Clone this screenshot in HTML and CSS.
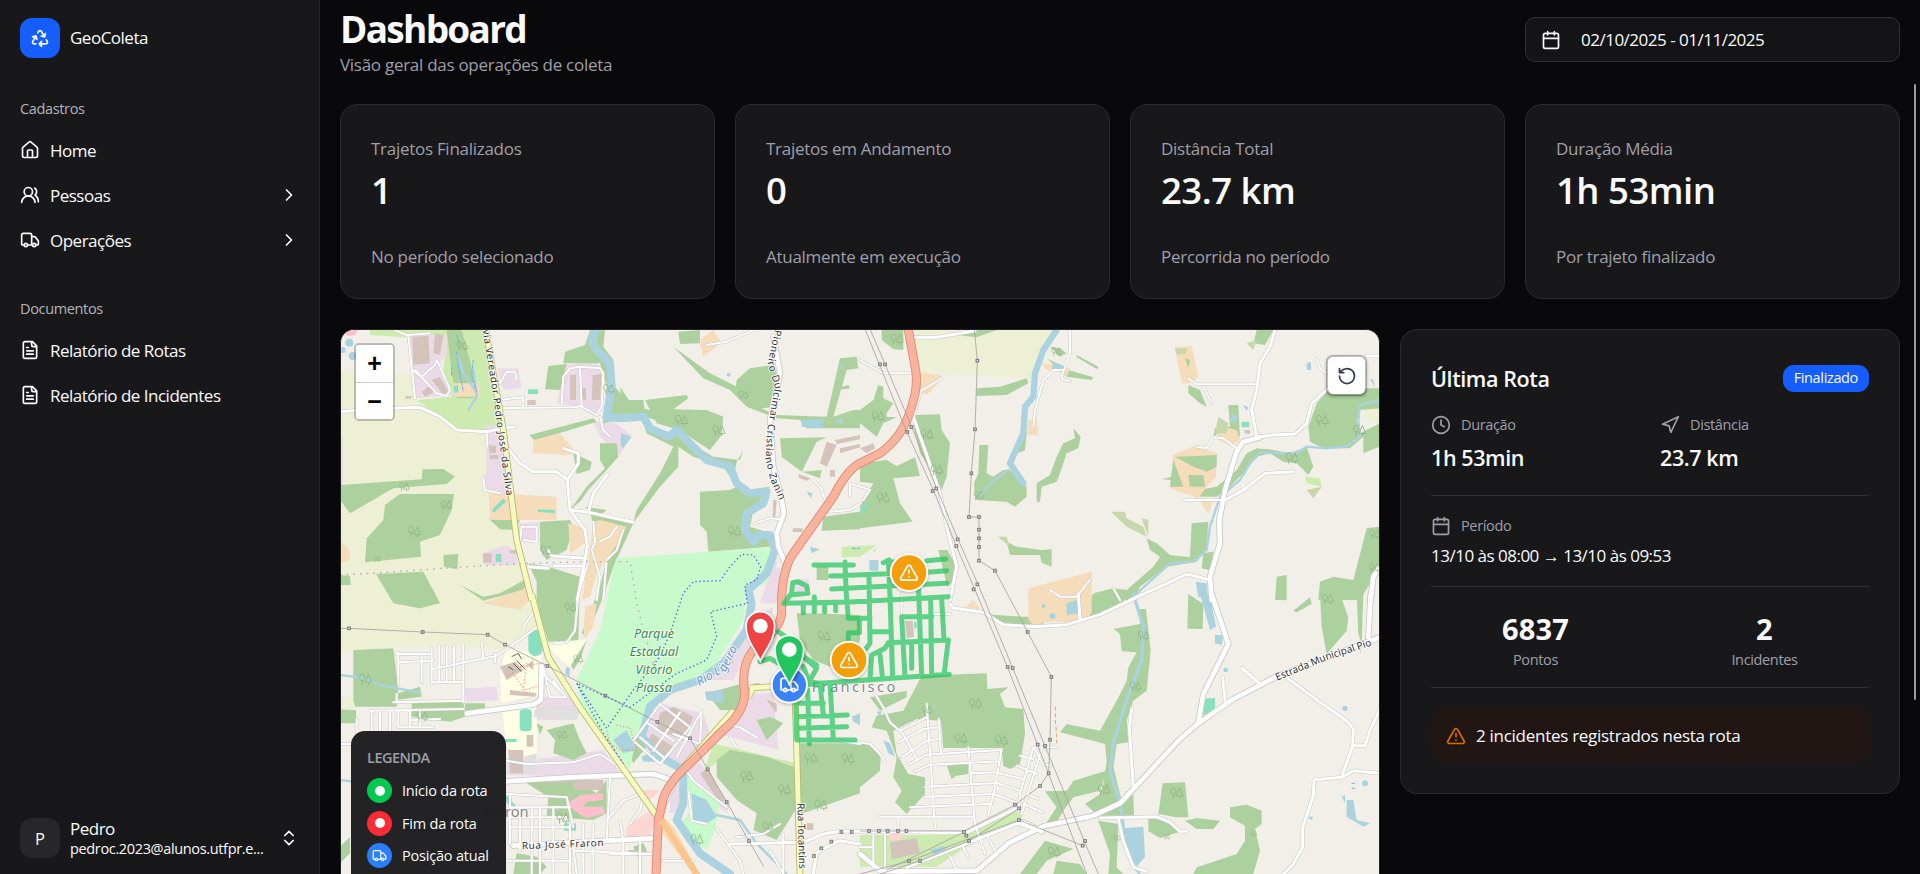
FILE: index.html
```html
<!DOCTYPE html>
<html lang="pt-BR">
<head>
<meta charset="utf-8">
<title>GeoColeta</title>
<link rel="stylesheet" href="styles.css">
</head>
<body>
<svg class="sprite" aria-hidden="true">
  <symbol id="i-recycle" viewBox="0 0 24 24"><path d="M7 19H4.815a1.83 1.83 0 0 1-1.57-.881 1.785 1.785 0 0 1-.004-1.784L7.196 9.5M11 19h8.203a1.83 1.83 0 0 0 1.556-.89 1.784 1.784 0 0 0 0-1.775l-1.226-2.12M14 16l-3 3 3 3M8.293 13.596 7.196 9.5 3.1 10.598M9.344 5.811l1.093-1.892A1.83 1.83 0 0 1 11.985 3a1.784 1.784 0 0 1 1.546.888l3.943 6.843M13.378 9.633l4.096 1.098 1.097-4.096"/></symbol>
  <symbol id="i-home" viewBox="0 0 24 24"><path d="M15 21v-8a1 1 0 0 0-1-1h-4a1 1 0 0 0-1 1v8M3 10a2 2 0 0 1 .709-1.528l7-5.999a2 2 0 0 1 2.582 0l7 5.999A2 2 0 0 1 21 10v9a2 2 0 0 1-2 2H5a2 2 0 0 1-2-2z"/></symbol>
  <symbol id="i-users" viewBox="0 0 24 24"><path d="M18 21a8 8 0 0 0-16 0"/><circle cx="10" cy="8" r="5"/><path d="M22 20c0-3.37-2-6.5-4-8a5 5 0 0 0-.45-8.3"/></symbol>
  <symbol id="i-truck" viewBox="0 0 24 24"><path d="M14 18V6a2 2 0 0 0-2-2H4a2 2 0 0 0-2 2v11a1 1 0 0 0 1 1h2M15 18H9M19 18h2a1 1 0 0 0 1-1v-3.65a1 1 0 0 0-.22-.624l-3.48-4.35A1 1 0 0 0 17.52 8H14"/><circle cx="17" cy="18" r="2"/><circle cx="7" cy="18" r="2"/></symbol>
  <symbol id="i-file" viewBox="0 0 24 24"><path d="M15 2H6a2 2 0 0 0-2 2v16a2 2 0 0 0 2 2h12a2 2 0 0 0 2-2V7ZM14 2v4a2 2 0 0 0 2 2h4M10 9H8M16 13H8M16 17H8"/></symbol>
  <symbol id="i-chevron" viewBox="0 0 24 24"><path d="m9 18 6-6-6-6"/></symbol>
  <symbol id="i-updown" viewBox="0 0 24 24"><path d="m7 15 5 5 5-5M7 9l5-5 5 5"/></symbol>
  <symbol id="i-calendar" viewBox="0 0 24 24"><path d="M8 2v4M16 2v4M3 10h18"/><rect x="3" y="4" width="18" height="18" rx="2"/></symbol>
  <symbol id="i-clock" viewBox="0 0 24 24"><circle cx="12" cy="12" r="10"/><path d="M12 6v6l4 2"/></symbol>
  <symbol id="i-nav" viewBox="0 0 24 24"><path d="M3 11 22 2l-9 19-2-8z"/></symbol>
  <symbol id="i-alert" viewBox="0 0 24 24"><path d="m21.73 18-8-14a2 2 0 0 0-3.48 0l-8 14A2 2 0 0 0 4 21h16a2 2 0 0 0 1.73-3M12 9v4M12 17h.01"/></symbol>
  <symbol id="i-reset" viewBox="0 0 24 24"><path d="M3 12a9 9 0 1 0 9-9 9.75 9.75 0 0 0-6.74 2.74L3 8M3 3v5h5"/></symbol>
</svg>

<div class="app">
  <aside class="sidebar">
    <div class="brand"><span class="logo"><svg class="icon"><use href="#i-recycle"/></svg></span><span class="t-nav">GeoColeta</span></div>
    <nav>
      <div class="group">
        <div class="group-label t-xs">Cadastros</div>
        <a class="item"><svg class="icon"><use href="#i-home"/></svg><span class="t-nav">Home</span></a>
        <a class="item"><svg class="icon"><use href="#i-users"/></svg><span class="t-nav">Pessoas</span><svg class="icon end"><use href="#i-chevron"/></svg></a>
        <a class="item"><svg class="icon"><use href="#i-truck"/></svg><span class="t-nav">Operações</span><svg class="icon end"><use href="#i-chevron"/></svg></a>
      </div>
      <div class="group">
        <div class="group-label t-xs">Documentos</div>
        <a class="item"><svg class="icon"><use href="#i-file"/></svg><span class="t-nav">Relatório de Rotas</span></a>
        <a class="item"><svg class="icon"><use href="#i-file"/></svg><span class="t-nav">Relatório de Incidentes</span></a>
      </div>
    </nav>
    <div class="user">
      <span class="avatar">P</span>
      <span class="who"><span class="t-nav">Pedro</span><span class="t-xs mail">pedroc.2023@alunos.utfpr.e...</span></span>
      <svg class="icon"><use href="#i-updown"/></svg>
    </div>
  </aside>

  <main class="main">
    <header class="head">
      <div>
        <h1>Dashboard</h1>
        <p class="t-sm muted">Visão geral das operações de coleta</p>
      </div>
      <button class="date"><svg class="icon"><use href="#i-calendar"/></svg><span class="t-date">02/10/2025 - 01/11/2025</span></button>
    </header>

    <section class="stats">
      <article class="card stat"><p class="t-sm muted">Trajetos Finalizados</p><p class="value">1</p><p class="t-sm muted foot">No período selecionado</p></article>
      <article class="card stat"><p class="t-sm muted">Trajetos em Andamento</p><p class="value">0</p><p class="t-sm muted foot">Atualmente em execução</p></article>
      <article class="card stat"><p class="t-sm muted">Distância Total</p><p class="value">23.7 km</p><p class="t-sm muted foot">Percorrida no período</p></article>
      <article class="card stat"><p class="t-sm muted">Duração Média</p><p class="value">1h 53min</p><p class="t-sm muted foot">Por trajeto finalizado</p></article>
    </section>

    <section class="lower">
      <div class="map">
        <svg class="tiles" viewBox="3 30 3114 1632" preserveAspectRatio="xMinYMin slice">
          <defs>
            <symbol id="tree" viewBox="0 0 40 40" overflow="visible"><path d="M9 38V22M9 26C-2 26-1 4 9 4s11 22 0 22zM29 38V30M29 4 18 30h21z"/></symbol>
            <symbol id="pylon" viewBox="0 0 10 10" overflow="visible"><rect x="1" y="1" width="8" height="8"/></symbol>

            <!-- minor streets -->
            <g id="minor">
              <path d="M165 30 205 48 225 235M205 45 270 40M215 150 245 170 285 135 290 120 300 140 330 210 320 228 290 220 225 150M480 240 550 232V262M480 264 700 262 725 258M665 250 670 170 690 145 720 140 780 145 790 160 785 260 770 285 725 260 720 140M780 290 790 330 810 350M440 335 442 380M430 475 435 510 480 520M480 190 500 155 525 155 530 180"/>
              <path d="M760 605 765 665 755 690 780 770 770 840M830 620 810 650 780 665M850 630 830 690 800 720 790 840M745 725 710 840M1100 75 1160 65 1240 30M1420 480 1440 500 1470 575 1530 570 1560 550M1245 610 1290 595 1320 598M1560 500 1530 490 1530 530M540 660 545 620 590 620 590 665 550 660"/>
              <g transform="translate(1560 0)"><path d="M0 120 70 160 150 160M180 215 245 175M520 320 525 270 550 180 580 150 610 150M605 170 630 100V30M985 175 1010 193H1195M1030 200 1055 250M1010 380 1040 385 1060 352 1090 355 1130 385M975 540H1090M1370 115 1380 145 1400 160M0 500 30 510 10 540M610 150 605 175 630 185M760 805 780 840M570 810 600 830 650 830 690 780"/></g>
              <g transform="translate(0 822)"><path d="M170 180H270M175 205 280 200M175 175V270M245 180V265M275 160V270M298 155V265M320 155V262M342 155V262M370 150V325M425 145 430 190M465 180V205M280 225 470 185 500 165 590 100M280 265 370 263M160 325 370 320M170 300V325M90 350 370 345M120 350V420M150 350V440M95 350V440M50 375V480M175 350V400M210 350V400M240 350V400M0 450H60M180 400H280M215 378 300 375"/>
              <path d="M500 500 560 510 700 505 780 480 825 510M590 40 550 100M715 0 705 110 680 145 620 150M600 230 680 310 630 310 610 220M640 260 670 300M500 600 680 610 700 700M810 550 800 740M510 640H690M510 670H680M510 700H690M510 750V600M540 640V770M575 640V840M600 640V840M640 640V840M690 690V840M500 800H690M730 690V840M760 690V840M700 770 940 780M800 680 850 620 900 600M840 680 850 740M870 690 900 650 910 600M700 760 710 840M850 740V840M900 740V840M810 780H940"/>
              <path d="M960 330 880 440 960 510 1050 400 960 330M1020 355 940 470M1085 350 1010 490M920 385 1000 440M900 430 970 490M1000 420 1080 450 1085 350M1030 520 1060 560 1160 640M1045 590 1055 680 1100 690M1130 705 1200 800 1210 840M960 800H1060M1190 730 1270 720 1320 690M1330 720V840M1290 770 1330 840M1150 390 1200 400 1250 430M1170 430 1190 460M1220 720V750M1560 450 1500 440"/></g>
              <g transform="translate(1560 822)"><path d="M270 60H220M125 60V0M45 300 70 340 90 385 130 420 170 495M200 330 225 700M236 375 243 480M325 460 345 690 375 780M425 465 405 580 385 665M120 410 200 370M115 445 190 405 236 400M125 490 200 440 236 435M145 512 200 482 425 468M165 532 210 512 420 502M335 538 405 535 490 555M195 578 410 567 480 590M195 608 400 600 470 625M150 640 390 630M60 668H340M115 670V705M480 485 520 495M470 515 530 540M520 460 550 510 575 515M520 460 480 600 475 650M545 465 485 660M500 600 535 615M490 630 550 655M520 460H590M475 690 545 715M40 715V820M75 715V820M0 760H40M0 445 30 450 60 480 75 505M270 785 290 830M310 760 325 790M385 730 405 770M1170 240 1200 270"/></g>
            </g>

            <!-- secondary streets -->
            <g id="street">
              <path d="M0 275 160 265 240 262 300 290 350 330 440 335 490 325 525 320M495 340 500 380 540 430 580 455 650 455 682 480 715 430 715 400 670 385M682 480 690 570 735 630 742 680 725 770 712 840M690 570 745 577 880 607M745 577 760 520 800 465M565 740 625 745M625 690 635 708 728 714M642 738H725"/>
              <g transform="translate(1560 0)"><path d="M160 52 230 52 345 32M1245 30 1230 80 1200 130 1190 210 1175 270 1190 350M1200 350 1240 345 1305 342 1340 310 1355 250 1410 200M1095 540 1150 510 1215 460 1300 455M180 220 160 290 240 520 265 640 290 740 270 840M1520 108H1560M810 840 900 800 980 762 1045 778"/></g>
              <g transform="translate(1560 822)"><path d="M1280 250 1380 325 1460 380 1480 405 1478 455 1445 550 1362 557 1360 605 1328 700 1328 760 1300 810 1270 840M1445 550 1480 530 1560 538M1478 455H1515L1530 410 1560 345M815 345 808 400 820 580M720 672 890 668 930 685 960 712H980M775 675 790 740 820 820 860 832M1095 320 1088 250M1200 270 1145 222M0 712 320 716M320 716 475 640M270 30 280 42 370 55 430 92 520 98 620 92 720 62 810 20 850 0M660 75 655 0M140 820 480 685"/></g>
              <g transform="translate(0 822)"><path d="M1170 750 1390 745 1450 720 1500 712 1560 712M1560 750 1500 740 1430 775 1420 840"/></g>
            </g>

            <!-- wider white roads -->
            <g id="main-road">
              <path d="M1325 540 1332 580 1310 640 1315 680 1333 725M1325 540 1300 440 1290 300 1320 160 1300 50"/>
              <g transform="translate(0 822)"><path d="M380 358 580 332 603 318 605 215M496 562 690 550 940 540 1000 560M520 755 935 733M960 655 1000 570"/></g>
              <g transform="translate(1560 0)"><path d="M1200 352 1150 365 1130 395 1095 510 1078 600 1080 670 1050 770 1055 840M1560 740 1540 770 1532 840"/></g>
              <g transform="translate(1560 822)"><path d="M1055 0 1105 150 1030 300 1015 385M1532 0 1525 130M1560 130 1245 250 1120 315 1015 388 960 435 820 585 780 628 700 665 550 697 450 745 350 830 120 832 60 830 0 780M490 685 545 712"/></g>
            </g>
            <g id="yellow">
              <path d="M437 30 490 330 530 660 575 840"/>
              <g transform="translate(0 822)"><path d="M575 0 625 190 720 340 960 680M1230 282 1340 275M1180 350 1030 520M1365 300 1370 460 1380 840M1225 310 1240 280"/></g>
            </g>
            <g id="trunk">
              <path d="M1705 28 1727 150Q1735 200 1715 260 1690 350 1620 400L1560 430Q1520 450 1480 530L1360 700Q1330 740 1325 830V880Q1320 930 1240 990 1200 1040 1215 1120 1210 1180 1150 1230L1050 1330Q970 1400 965 1460L955 1500 948 1662"/>
            </g>
            <path id="p-vereador" d="M428 30 455 200 500 530"/>
            <path id="p-pioneiro" d="M1312 30 1292 130 1312 200 1290 330 1285 420 1300 480 1330 545"/>
            <path id="p-toc" d="M1372 1450 1378 1670"/>
            <path id="p-jose" d="M546 1588 792 1578"/>
            <path id="p-ligeiro" d="M1078 1098 1160 1050 1220 930"/>
            <path id="p-estrada" d="M2812 1082 2960 1020 3130 965"/>
          </defs>

          <rect class="land" x="0" y="0" width="3120" height="1700"/>

          <!-- farmland -->
          <g class="farm">
            <path d="M0 150 220 165 225 240 300 280 360 335 440 330 445 600 500 610 550 740 590 870 600 930 490 990 170 980 0 1000ZM1725 30H2150L2110 90 2070 175 1725 155ZM3070 270 3120 240V310L3070 300ZM0 1130H40V1170H0Z"/>
          </g>
          <g class="grass">
            <path d="M90 27H430L488 335H365L230 240 335 230 310 150 320 60 90 45Z"/>
            <path d="M1120 1270 1370 1330V1345L1150 1310 1090 1360Z"/>
            <path d="M1560 1545H1860L2040 1455 2045 1500 1880 1580 1790 1640H1560Z"/>
            <path d="M1505 680 1610 675 1560 710 1505 712Z"/>
          </g>

          <!-- industrial and commercial -->
          <g class="industry">
            <path d="M205 45H320V100L300 130 340 225 225 235ZM470 145 535 145 545 205 490 210ZM675 135 765 125 795 150 785 270 765 290 720 262 650 250ZM760 305 820 305 875 345 840 405 780 350ZM437 315 485 320 500 525 435 515 430 470 440 460ZM425 700 500 675 535 700 530 735 430 735ZM535 610 600 605 595 665 545 665ZM0 340 8 350V500H0Z"/>
            <path d="M600 1130 690 1130 720 1180 690 1200H580ZM500 1330 790 1290 850 1370H720L500 1365ZM960 1150 1090 1180 1110 1240 1020 1340 890 1250ZM1230 1120 1300 1120 1315 1290 1130 1240 1180 1190ZM1030 1350 1080 1330 1170 1450 1160 1480 1060 1400ZM1225 900 1300 860 1290 930 1215 1010 1180 1080 1080 1080 1120 1060ZM1290 760 1320 740V850L1260 850ZM1370 780 1405 775 1410 810 1365 820ZM370 1105 470 1100 475 1140 380 1145ZM1290 690 1310 690V760H1290ZM990 1380 1040 1370 1030 1470 990 1480Z"/>
          </g>
          <g class="retail"><path d="M860 1520 960 1450 930 1550H860ZM890 1410 960 1410 930 1440ZM1650 1540H1690L1680 1560H1650Z"/></g>

          <!-- woods -->
          <g class="wood">
            <path d="M320 30H365L410 200 400 235H350L335 160ZM750 30H795L790 80 820 120 825 200 860 240 910 240 915 280 790 310 800 200 780 130 670 130 675 95 735 75ZM1015 35 1080 30V70L1020 72ZM625 138 680 132 660 210 615 208ZM568 345 760 295 770 305 640 345 585 362ZM780 370 830 370 835 410 800 450 745 510 720 545 690 570 740 500 795 445 780 420ZM700 400 755 425 750 450 710 462ZM840 200 870 245 910 265 1000 290 990 310 910 290 850 270ZM915 240 1040 225 1045 235 1000 268 1100 270 1150 290 1145 345 1110 390 1040 345 1000 325 950 310ZM910 310 1010 345 1120 410 1200 420 1210 390 1190 425 1180 480 1225 510 1290 500 1240 570 1230 620 1290 640 1290 680 1105 695 1100 635 1080 615V515L1170 510 1190 500 1150 440 1060 410 1015 380V440L960 500 880 608 890 570 960 460 1000 380 920 340ZM1190 180 1230 145 1300 135 1310 160 1300 260 1240 270 1185 215ZM1000 80 1110 160 1190 200 1240 255 1310 285 1460 290 1500 115 1550 110 1555 145 1520 150 1480 290 1540 270H1560V325H1400L1380 300 1310 295 1220 260 1170 210 1090 175ZM1490 205 1525 195 1530 205 1495 210ZM1320 355 1460 352 1430 365 1385 455 1325 410ZM1385 455 1445 450 1440 475ZM1450 590 1560 575V628L1445 632Z"/>
            <path d="M0 495 245 478 248 448 310 447 345 470 320 492 160 505 30 580 0 540ZM180 522H342L335 570 300 645 240 665 243 710 75 727 80 655 130 600 135 555ZM310 705 355 702 352 748 312 740ZM108 762 250 755 290 830 300 850 240 865 160 850ZM0 765 30 768 32 795H0ZM360 795 430 830 480 820 570 770 550 810 430 842ZM600 605 690 600 700 620 680 690 620 720 600 690ZM445 595 540 600 525 630 480 628ZM565 730 625 740 720 770 715 960 690 970 625 965 605 900 590 840 590 785ZM690 570 880 610 820 740 790 830 740 950 725 940 780 800 800 720 840 640 760 620 750 570 700 575ZM735 560 800 570 770 595Z"/>
            <path d="M40 990 160 985 175 1110 170 1160H45L40 1140ZM175 1120 240 1100 245 1130 170 1140ZM0 1168 48 1170V1210L0 1210ZM215 1150 370 1145 375 1190 330 1205 215 1190ZM375 1150 435 1150V1170L375 1175ZM620 1230 700 1210 720 1260 740 1300 700 1320 640 1300 645 1260ZM590 1210 610 1220 600 1245ZM680 1010 740 960 720 1020 700 1050ZM590 1370 690 1370 770 1420 800 1380V1480L760 1500 620 1490 625 1430 560 1390ZM530 1600 590 1610 620 1640 600 1662H520ZM830 1205 870 1215 920 1280 880 1330 830 1250ZM1100 1120 1210 1090V1170H1140ZM1250 1200 1290 1190 1330 1210 1280 1260ZM1130 1320 1170 1290 1280 1310 1370 1345V1500L1390 1480 1560 1420V1270L1380 1270 1380 1450 1360 1480 1310 1560 1240 1530 1250 1480 1190 1440 1130 1370ZM1370 880 1420 880 1560 885V960L1520 1060 1420 1020 1380 960ZM1430 740H1465V780H1430ZM880 1580 910 1570 920 1590 890 1610ZM0 1580 30 1550V1600L0 1630Z"/>
            <g transform="translate(1560 0)">
              <path d="M65 30H130V90L100 88 65 60ZM55 195 70 200 70 235 100 250 80 280 80 290 110 292 70 310 50 350 0 310V270L40 240ZM0 430 80 420 110 438 165 412 180 468 100 475 120 550 158 605 0 625V560L40 490 0 485ZM165 285 240 283 245 330 270 370 260 470 245 510 220 460 180 400 160 320ZM290 45 330 30H410L350 52ZM350 205 420 200 500 175 505 190 440 225 350 228ZM570 80 600 85 620 100 600 110ZM560 115 600 135 625 150 700 172 695 180 620 170ZM650 105 715 140 712 148 650 112ZM358 375 385 375 380 460 400 470 430 450 450 450 500 500 500 530 465 560 440 545 345 540 342 490 355 460ZM480 340 500 340 495 390 475 400ZM640 325 662 350 655 385 620 400 600 460 590 485 545 500 540 545 530 545 530 490 570 465 590 410 610 370 645 355ZM440 665 470 680 545 690 575 688V740L545 728 540 705 450 705ZM860 655 890 670 930 705 990 712 995 610 1045 605 1040 690 1010 725 920 740 840 800 820 840H690L700 820 760 805 800 810 880 740 900 710 870 690ZM1190 30H1240L1215 75 1180 70ZM985 195 1020 210 1040 260 1020 250 985 220ZM1105 255H1135L1140 350 1110 350 1100 330 1060 350 1065 325 1110 320ZM985 410 1030 405 1055 440 1030 455 990 430ZM940 405 1070 400V410L945 415 930 500 960 505 930 500 935 480 905 478 935 470ZM990 468H1030V500L995 500ZM1015 510 1070 500 1130 450 1160 400 1190 385 1240 390 1290 400 1340 380 1360 440 1345 465 1310 430 1270 425 1230 400 1190 410 1150 460 1100 510 1070 530 1020 530ZM1410 205H1560V265L1500 270 1490 300 1500 340 1560 310V380L1510 400 1510 350 1470 385 1390 385 1350 365 1345 320 1370 250ZM1520 625 1560 620V740L1530 790 1500 840H1375L1380 785 1420 770 1480 780ZM1250 770 1280 765V840H1245ZM1030 700 1060 695 1050 750 1025 745ZM235 690H262L285 730 275 790 262 800Z"/>
            </g>
            <g transform="translate(1560 822)">
              <path d="M375 60 440 65 530 70 555 92 450 90 390 75ZM690 10 820 0 800 15 720 60 690 70ZM985 0 1030 30 1028 105 982 104ZM840 45H858L872 170 860 290 820 320 800 380 805 445 770 450 760 520 780 600 790 630 820 600 822 665 715 665 675 630 720 600 730 570 740 500 735 450 700 440 600 415 620 390 720 410 770 320 800 260 805 220 830 175 785 172 780 120 760 105 840 90ZM185 245 380 238 382 285 445 280 420 300 435 340 490 345 495 420 480 510 450 525 430 515 425 462H250L243 380 170 375 100 410 110 480 145 540 195 550V600L140 660 105 625 125 590 100 550 110 490 80 410 35 400 50 365 130 350ZM30 310 140 290V310L60 350ZM0 440 30 450 62 490 60 530 0 580ZM260 515 325 510V540L290 545 275 555ZM555 592 620 590 640 560 740 530 720 590 640 610 610 650 590 685H560L590 640ZM555 740 640 765 560 800 530 840H480ZM590 800 660 810 680 840H580ZM715 680 775 690 770 820 790 840H745L750 780ZM865 672 930 680 955 715 900 732 865 712ZM908 568 975 565 985 670 950 670 895 660ZM975 680 1010 672 1080 680 1060 705 1010 705ZM1110 640 1160 632 1205 650 1205 690 1185 705 1200 770 1180 840H1000L1010 820 1070 800 1130 780 1155 740V695L1110 670ZM1300 50 1350 10 1355 30 1310 55ZM1380 0H1440L1465 70 1460 110 1400 180 1385 100ZM1490 0H1510L1505 150 1495 120ZM1245 0H1275V20ZM150 0 160 0Z"/>
            </g>
          </g>
          <path class="park" d="M828 715 1290 683 1300 720 1280 790 1220 810 1210 900 1100 1080 980 1105 930 1150 890 1240 870 1350 720 1150 710 1080 780 930Z"/>
          <path class="park" d="M1040 1350 1070 1400 1140 1440 1125 1530 1100 1590 1010 1520 1050 1480Z"/>
          <path class="grass" d="M1600 690 1615 680 1600 700ZM2895 470 2940 475 2945 500 2900 490Z"/>

          <!-- orchards and residential parcels -->
          <g class="orchard">
            <path d="M580 360 660 340 710 400 685 405 578 400ZM445 520 650 530V600L450 600ZM685 610 725 620 735 670 690 700ZM760 605 780 600 860 620 840 660 770 760 750 830 725 840 745 720ZM340 190H420V230H345ZM1085 55 1120 30 1140 60 1130 80 1090 110 1080 75ZM0 660 30 690V720L0 730ZM430 850 570 800 580 830 540 870ZM735 860 770 850 760 920 730 960ZM960 1480 1000 1520 1080 1662H1060L960 1530Z"/>
            <g transform="translate(1560 0)"><path d="M150 155 245 165 235 190 200 225 180 215ZM945 82 995 78 1015 170 990 190H965ZM545 130 590 135 590 155 560 150ZM590 135 630 145 620 170ZM505 300 530 295 535 345 500 345ZM940 405 1010 375 1070 400 1068 470 1040 500 1015 535 930 505ZM1090 320 1130 330 1140 360 1115 380 1060 352ZM1020 540 1060 540 1045 585ZM505 805 695 755V880L520 915 505 900Z"/></g>
            <g transform="translate(1560 822)"><path d="M505 0H695L690 70 640 90 530 75 510 50ZM315 40 340 18 360 45Z"/></g>
          </g>
          <g class="wood"><path d="M2505 410 2570 408 2630 405V440L2600 455 2560 440ZM2500 420 2530 500 2490 500ZM2545 465H2590L2595 500 2550 500ZM2535 115 2550 120 2545 145Z"/></g>
          <g class="scrub"><path d="M2505 85H2540V100L2510 105ZM2313 575 2355 575 2360 595 2410 620 2420 650 2360 620ZM2405 595 2425 600 2425 650ZM1973 650 2000 650 2010 680ZM2635 290 2665 310 2660 340 2625 340ZM2900 510 2945 500 2920 535ZM2720 70 2750 60 2740 90ZM2860 500 2900 480Z"/></g>
          <g class="campus"><path d="M500 980 605 1005 610 1120 485 1150 480 1060ZM485 1160H590V1350L500 1280ZM620 965 740 960 690 1040 640 1000Z"/></g>

          <!-- buildings, pitches and pools -->
          <g class="building">
            <path d="M217 50 265 48 270 130 220 135ZM285 40 310 45 300 105 280 100ZM275 180 300 170 325 215 310 225ZM245 215 270 195 285 215 255 230ZM758 165 785 162 780 240 755 240ZM690 165H708V240H690ZM725 205H738V240H722ZM562 240H587V255H562ZM447 375 468 378V398H448ZM449 405H475V418H449ZM1460 365 1490 375 1460 440 1440 430ZM1485 360 1560 345V358L1490 372ZM1500 385 1560 372V382L1500 400ZM1375 462 1412 475 1400 482 1378 475ZM1470 450H1485V470H1470ZM1358 625H1388V636H1358ZM1300 540 1310 540 1305 600 1298 600ZM430 700H455V728H430ZM510 690H535V700H510ZM196 228H215V236H196Z"/>
            <path d="M480 1040 525 1025 550 1050 500 1080ZM560 1035 580 1020 580 1050ZM510 1110 590 1120 585 1130 510 1125ZM560 1245H580V1280H560ZM505 1290H550V1360H510ZM560 1330 585 1340V1360H560ZM700 1380H790V1410H700ZM620 1375 690 1370V1385L620 1390ZM1080 1360 1105 1345 1155 1440 1140 1450ZM960 1180 1000 1160 1060 1190 1030 1260 950 1230ZM1150 1010H1180V1030H1150ZM1240 1090H1260V1110H1240ZM1280 1140 1310 1150V1180ZM935 1240 1000 1280 980 1320 920 1270ZM865 1590H920V1600H865ZM1400 1510 1420 1510 1420 1530 1400 1530Z"/>
            <path d="M1560 385 1600 370 1605 385 1580 400ZM2712 330H2730V342L2715 340ZM1695 902H1718L1722 950 1700 955ZM1650 1565 1730 1555 1740 1600 1655 1618Z"/>
          </g>
          <g class="parking"><path d="M590 1155 720 1165 710 1200 580 1190ZM550 1310 590 1300V1360H550Z"/></g>
          <g class="pitch"><rect x="565" y="930" width="42" height="78" rx="20"/><rect x="539" y="1168" width="36" height="66" rx="12"/><path d="M564 208H594V222H564ZM455 570 490 535 498 545 462 578ZM593 568 645 570V580L593 575ZM467 702H484V726H467ZM498 1257H530V1266H498ZM672 1510H708V1532H672ZM340 198 354 195 356 218 343 217ZM495 1420 530 1460 530 1470 500 1450ZM1560 570 1575 548 1585 555 1570 580ZM2705 305H2728V322H2705ZM1722 905H1730V925H1722ZM2590 1135 2625 1135V1180L2590 1185ZM970 1330 985 1325 990 1340Z"/></g>
          <path class="pink" d="M15 30H55L45 45 20 48ZM685 1450 720 1425 790 1420V1440L740 1445 730 1460 790 1460 795 1480 740 1495 715 1480 690 1460Z"/>
          <g class="water">
            <circle cx="28" cy="68" r="12"/><circle cx="38" cy="108" r="12"/><circle cx="8" cy="90" r="9"/><circle cx="1166" cy="164" r="6"/>
            <path d="M843 340 875 350 850 385 842 378ZM1385 300 1450 298 1448 325 1385 320ZM1500 130 1512 140 1505 150ZM1493 295 1508 295 1505 310 1492 308ZM1400 515 1418 520 1412 535ZM1410 680 1440 688 1415 700ZM680 1040 690 1045 688 1070 675 1060ZM1095 1115 1150 1110V1150L1100 1140ZM820 1260 860 1230 890 1290 850 1300ZM1055 1420 1100 1440 1130 1490 1100 1510 1060 1500ZM905 1310 935 1295 945 1325 910 1325ZM1535 1190 1560 1180V1215L1540 1205ZM2140 125 2180 140 2165 155 2135 150ZM2900 130 2912 125 2914 150H2900ZM2672 285H2690V305H2672ZM2708 255 2725 262 2720 272ZM1588 720H1615V752H1588ZM2588 600 2560 590ZM2567 785 2600 790 2605 840 2575 830ZM2580 822 2610 826 2628 920 2610 930ZM2625 945 2650 945 2645 975 2625 970ZM2180 850 2210 840 2215 880 2180 885ZM1770 1590 1810 1578 1820 1590 1790 1610ZM2345 1525 2410 1520 2415 1610 2390 1640 2350 1580ZM2900 1490 2920 1490 2915 1500ZM3005 1430 3015 1425 3015 1450ZM3020 1440 3040 1440 3050 1500 3090 1510 3070 1520 3020 1490ZM2915 1160 2930 1160ZM3060 985 3065 980 3060 1005ZM1630 1260 1650 1270 1665 1310 1645 1300ZM1610 1175 1625 1172 1620 1190ZM3090 175 3100 180 3105 205Z"/>
            <circle cx="3015" cy="1165" r="8"/><circle cx="3075" cy="1390" r="9"/><circle cx="2137" cy="888" r="9"/><circle cx="2110" cy="858" r="6"/><circle cx="2657" cy="1050" r="7"/>
          </g>

          <!-- rivers -->
          <g class="river">
            <path class="w24" d="M780 20Q740 50 770 90L810 130 815 200 800 290 840 295 910 290 930 325 985 350 1010 330 1040 360 1100 420 1170 440 1190 490 1230 520 1280 515 1270 550 1220 580 1215 630 1240 665 1255 645 1290 645 1305 690 1280 760 1225 810 1235 850 1220 930 1150 1030 1080 1080 990 1110 930 1160 905 1250 960 1310 1030 1350 1030 1450 1010 1500 1080 1600 1170 1662"/>
            <path class="w18" d="M2150 30 2110 90 2085 160 2080 230 2055 260 2050 340 2010 430 2050 490"/>
            <path class="w6" d="M2005 450 1950 490 1920 530M0 1065 60 1072 120 1095 240 1118M3120 240 3060 255 3055 300 3060 350 3020 380 2960 385 2900 380 2870 400 2760 398 2730 430 2700 480 2640 530 2610 620 2600 690 2560 725 2490 730 2380 830M0 1380 40 1385M400 150 410 230 385 270M350 100 370 160 405 210M1130 1485 1200 1500 1250 1570 1340 1662M2380 1640 2400 1662"/>
            <path class="w10" d="M2380 822 2410 920 2405 1020 2360 1140 2320 1270 2310 1350 2340 1450 2350 1520"/>
          </g>
          <path class="ditch" d="M350 95 355 140 370 215M335 140V170M400 120 395 165 410 215M350 45 360 75M3035 1390H3045M3035 1405H3045M1535 685H1560"/>

          <g class="case"><use href="#minor" class="c9"/><use href="#street" class="c13"/><use href="#main-road" class="c20"/></g>
          <g class="road"><use href="#minor" class="c6"/><use href="#street" class="c9"/><use href="#main-road" class="c15"/></g>
          <use href="#yellow" class="ycase"/><use href="#yellow" class="yfill"/>
          <use href="#trunk" class="tcase"/><use href="#trunk" class="tfill"/>
          <path class="orangeroad" d="M965 1500 1075 1670"/>

          <!-- power lines -->
          <g class="power">
            <path d="M1575 27 1700 335 1780 510 1850 680 1905 810 2003 1042 2093 1275 2240 1662M1590 27 1715 320 1790 505 1855 660 1915 795 2018 1044 2115 1278 2240 1580 2275 1662M1903 27 1912 122 1905 330 1894 460 1887 591H1917V722L1965 752 2063 936 2134 1070 2130 1260 2126 1360 2100 1398 2025 1455M0 925 27 925 248 936 443 944 495 974 622 1038 796 1127 952 1206 1050 1255 1103 1348 1160 1446 1227 1563 1271 1640M1560 1533H1872L2025 1455M1887 1563 2037 1465M2037 1500 2228 1577M1872 1536 1640 1650M1887 1563 1740 1623 1620 1662M2037 1500 1706 1624 1560 1662"/>
            <g class="nodes">
              <use href="#pylon" x="1615" y="128" width="10" height="10"/><use href="#pylon" x="1630" y="128" width="10" height="10"/><use href="#pylon" x="1709" y="316" width="10" height="10"/><use href="#pylon" x="1697" y="331" width="10" height="10"/><use href="#pylon" x="1784" y="500" width="10" height="10"/><use href="#pylon" x="1773" y="508" width="10" height="10"/><use href="#pylon" x="1848" y="653" width="10" height="10"/><use href="#pylon" x="1844" y="673" width="10" height="10"/><use href="#pylon" x="1907" y="788" width="10" height="10"/><use href="#pylon" x="1896" y="803" width="10" height="10"/>
              <use href="#pylon" x="1907" y="117" width="10" height="10"/><use href="#pylon" x="1900" y="323" width="10" height="10"/><use href="#pylon" x="1889" y="455" width="10" height="10"/><use href="#pylon" x="1882" y="586" width="10" height="10"/><use href="#pylon" x="1912" y="586" width="10" height="10"/><use href="#pylon" x="1912" y="624" width="10" height="10"/><use href="#pylon" x="1912" y="650" width="10" height="10"/><use href="#pylon" x="1912" y="676" width="10" height="10"/><use href="#pylon" x="1912" y="717" width="10" height="10"/><use href="#pylon" x="1960" y="747" width="10" height="10"/>
              <use href="#pylon" x="2058" y="931" width="10" height="10"/><use href="#pylon" x="2129" y="1066" width="10" height="10"/><use href="#pylon" x="1998" y="1036" width="10" height="10"/><use href="#pylon" x="2013" y="1039" width="10" height="10"/><use href="#pylon" x="2088" y="1269" width="10" height="10"/><use href="#pylon" x="2110" y="1273" width="10" height="10"/><use href="#pylon" x="2125" y="1254" width="10" height="10"/><use href="#pylon" x="2121" y="1355" width="10" height="10"/><use href="#pylon" x="2095" y="1393" width="10" height="10"/><use href="#pylon" x="2020" y="1449" width="10" height="10"/><use href="#pylon" x="2032" y="1460" width="10" height="10"/><use href="#pylon" x="2032" y="1495" width="10" height="10"/><use href="#pylon" x="2223" y="1572" width="10" height="10"/><use href="#pylon" x="2230" y="1558" width="10" height="10"/>
              <use href="#pylon" x="22" y="920" width="10" height="10"/><use href="#pylon" x="243" y="931" width="10" height="10"/><use href="#pylon" x="438" y="939" width="10" height="10"/><use href="#pylon" x="490" y="969" width="10" height="10"/><use href="#pylon" x="617" y="1033" width="10" height="10"/><use href="#pylon" x="791" y="1122" width="10" height="10"/><use href="#pylon" x="947" y="1201" width="10" height="10"/><use href="#pylon" x="1045" y="1250" width="10" height="10"/><use href="#pylon" x="1098" y="1343" width="10" height="10"/><use href="#pylon" x="1155" y="1441" width="10" height="10"/><use href="#pylon" x="1222" y="1558" width="10" height="10"/>
              <use href="#pylon" x="1582" y="1528" width="10" height="10"/><use href="#pylon" x="1612" y="1528" width="10" height="10"/><use href="#pylon" x="1638" y="1528" width="10" height="10"/><use href="#pylon" x="1669" y="1528" width="10" height="10"/><use href="#pylon" x="1694" y="1528" width="10" height="10"/><use href="#pylon" x="1867" y="1531" width="10" height="10"/><use href="#pylon" x="1874" y="1542" width="10" height="10"/><use href="#pylon" x="1882" y="1558" width="10" height="10"/><use href="#pylon" x="1702" y="1618" width="10" height="10"/><use href="#pylon" x="1735" y="1618" width="10" height="10"/><use href="#pylon" x="1499" y="1531" width="10" height="10"/><use href="#pylon" x="1530" y="1531" width="10" height="10"/><use href="#pylon" x="1417" y="1603" width="10" height="10"/><use href="#pylon" x="1439" y="1580" width="10" height="10"/><use href="#pylon" x="1469" y="1560" width="10" height="10"/>
            </g>
          </g>
          <path class="boundary" d="M0 765 140 757 350 742 560 730 740 725 870 725 890 850 910 930 940 1030"/>
          <path class="footway" d="M1222 850 1215 795 1250 780 1262 740 1240 705 1205 703 1170 740 1140 782 1060 785 1030 820 1020 850 990 940 960 1010 880 1110 800 1225 710 1090 870 1162 1010 1060 1100 1020 1130 950 1112 875 1222 850M710 1090 790 1240 850 1330"/>
          <path class="paths" d="M830 1215 870 1225 890 1290 840 1290 810 1270 800 1230M500 1070 560 1030 550 1110 590 1100M540 1040 600 1030M560 1120 520 1060"/>
          <g class="rail"><path d="M515 1010 535 1000 545 1018M520 1030 545 1055M530 1022 555 1047M520 1050 505 1040"/></g>
          <path class="track" d="M2146 1160V1205L2150 1240V1270"/>

          <g class="trees">
            <use href="#tree" x="1006" y="282" width="38" height="38"/><use href="#tree" x="1118" y="312" width="38" height="38"/><use href="#tree" x="176" y="485" width="34" height="30"/><use href="#tree" x="303" y="537" width="34" height="36"/><use href="#tree" x="205" y="615" width="38" height="38"/><use href="#tree" x="1165" y="615" width="38" height="38"/><use href="#tree" x="1196" y="210" width="30" height="30"/><use href="#tree" x="350" y="60" width="34" height="34"/><use href="#tree" x="790" y="190" width="34" height="34"/><use href="#tree" x="602" y="675" width="34" height="34"/><use href="#tree" x="95" y="706" width="34" height="22"/>
            <use href="#tree" x="1652" y="38" width="38" height="38"/><use href="#tree" x="1596" y="270" width="38" height="38"/><use href="#tree" x="1742" y="324" width="38" height="38"/><use href="#tree" x="1772" y="430" width="38" height="38"/><use href="#tree" x="1611" y="514" width="38" height="38"/><use href="#tree" x="2132" y="80" width="36" height="30"/><use href="#tree" x="2928" y="282" width="38" height="38"/><use href="#tree" x="3040" y="312" width="38" height="38"/><use href="#tree" x="2838" y="395" width="38" height="38"/><use href="#tree" x="1902" y="510" width="30" height="30"/><use href="#tree" x="3088" y="725" width="34" height="34"/><use href="#tree" x="3088" y="625" width="34" height="34"/>
            <use href="#tree" x="58" y="1058" width="38" height="38"/><use href="#tree" x="228" y="1172" width="38" height="34"/><use href="#tree" x="674" y="845" width="34" height="34"/><use href="#tree" x="700" y="1000" width="30" height="34"/><use href="#tree" x="652" y="1225" width="30" height="40"/><use href="#tree" x="650" y="1475" width="38" height="38"/><use href="#tree" x="1052" y="1540" width="38" height="38"/><use href="#tree" x="1202" y="1350" width="38" height="38"/><use href="#tree" x="1315" y="1390" width="38" height="38"/><use href="#tree" x="1394" y="1295" width="38" height="38"/><use href="#tree" x="1506" y="1297" width="38" height="38"/><use href="#tree" x="1424" y="1436" width="38" height="38"/><use href="#tree" x="1268" y="1500" width="32" height="38"/><use href="#tree" x="1434" y="930" width="38" height="38"/>
            <use href="#tree" x="1888" y="1132" width="38" height="38"/><use href="#tree" x="1844" y="1237" width="38" height="38"/><use href="#tree" x="1966" y="1243" width="38" height="38"/><use href="#tree" x="2273" y="1390" width="38" height="38"/><use href="#tree" x="2492" y="1400" width="38" height="38"/><use href="#tree" x="2124" y="1577" width="38" height="38"/><use href="#tree" x="2394" y="930" width="34" height="34"/><use href="#tree" x="2368" y="1082" width="38" height="34"/><use href="#tree" x="2946" y="820" width="36" height="34"/><use href="#tree" x="2320" y="1535" width="22" height="38"/><use href="#tree" x="2464" y="1540" width="34" height="20"/><use href="#tree" x="2730" y="1522" width="22" height="38"/><use href="#tree" x="1745" y="1155" width="34" height="30"/>
          </g>

          <!-- labels -->
          <g class="labels">
            <text class="street-name" textLength="503"><textPath href="#p-vereador">via Vereador Pedro José da Silva</textPath></text>
            <text class="street-name" dy="8" textLength="522"><textPath href="#p-pioneiro">Pioneiro Dulcimar Cristiano Zanin</textPath></text>
            <text class="street-name"><textPath href="#p-toc">Rua Tocantins</textPath></text>
            <text class="street-name"><textPath href="#p-jose" textLength="245">Rua José Fraron</textPath></text>
            <text class="street-name"><textPath href="#p-estrada">Estrada Municipal Pio</textPath></text>
            <text class="river-name"><textPath href="#p-ligeiro">Rio Ligeiro</textPath></text>
            <text class="park-name" x="942" y="954">Parque</text><text class="park-name" x="942" y="1008">Estadual</text><text class="park-name" x="942" y="1062">Vitório</text><text class="park-name" x="942" y="1115">Piassa</text>
            <text class="district" x="1300" y="1117" textLength="366">São Francisco</text>
            <text class="district" x="430" y="1490">Fraron</text>
          </g>

          <!-- travelled route -->
          <g class="route" transform="translate(1200 660)">
            <path d="M222 75H340M272 108 480 100M275 147 450 138 620 130M132 190 330 186 625 170M440 66 480 66M430 68 448 60M560 62 617 57M560 97 620 92M315 66 318 150 325 235 390 235M132 190 155 160 158 128 175 125 200 138 204 160 155 164M190 190V218M223 170V215M254 190V215M287 190V212M387 105 390 310 375 330 330 325M445 60 450 170 458 410M358 235V278H325V300M390 275 450 275M535 130 545 405M485 230H575M485 230 495 410M572 175 575 405M605 175 612 300M515 305V385M625 300 445 308 435 325 395 345 390 420M625 300 612 405M420 345 428 418M185 435 240 430 628 403M60 365 90 355 115 370 150 380M115 275 150 300 190 350 230 385 205 430M190 350 230 375M190 380 205 420M150 420 240 430M166 440 170 600H345M203 450 208 612M240 430 250 525M270 430 280 600M170 490H250M170 530 322 525M170 565 320 560"/>
          </g>

          <!-- markers -->
          <g transform="translate(1200 660)">
            <g class="badge"><circle cx="148" cy="435" r="53" fill="#3b82f6"/><use href="#i-truck" x="118" y="405" width="60" height="60"/></g>
            <g class="badge"><circle cx="507" cy="98" r="55" fill="#f59e0b"/><use href="#i-alert" x="477" y="68" width="60" height="60"/></g>
            <g class="badge"><circle cx="327" cy="360" r="55" fill="#f59e0b"/><use href="#i-alert" x="297" y="330" width="60" height="60"/></g>
            <g class="pin"><path d="M61 363C44 325 18 300 18 258a43 43 0 0 1 86 0C104 300 78 325 61 363Z" fill="#ef4444"/><circle cx="61" cy="258" r="22"/></g>
            <g class="pin"><path d="M148 434C131 396 105 371 105 329a43 43 0 0 1 86 0C191 371 165 396 148 434Z" fill="#22c55e"/><circle cx="148" cy="329" r="22"/></g>
          </g>
        </svg>
        <div class="zoom"><button>+</button><button>−</button></div>
        <button class="reset"><svg class="icon"><use href="#i-reset"/></svg></button>
        <div class="legend">
          <p class="legend-title">LEGENDA</p>
          <p class="row"><span class="dot green"><i></i></span><span class="t-leg">Início da rota</span></p>
          <p class="row"><span class="dot red"><i></i></span><span class="t-leg">Fim da rota</span></p>
          <p class="row"><span class="dot blue"><svg class="icon"><use href="#i-truck"/></svg></span><span class="t-leg">Posição atual</span></p>
        </div>
      </div>

      <article class="card last">
        <div class="last-head"><h2>Última Rota</h2><span class="pill t-xs">Finalizado</span></div>
        <div class="pair top">
          <div><p class="lbl"><svg class="icon"><use href="#i-clock"/></svg><span class="t-xs">Duração</span></p><p class="mid">1h 53min</p></div>
          <div><p class="lbl"><svg class="icon"><use href="#i-nav"/></svg><span class="t-xs">Distância</span></p><p class="mid">23.7 km</p></div>
        </div>
        <div class="period"><p class="lbl"><svg class="icon"><use href="#i-calendar"/></svg><span class="t-xs">Período</span></p><p class="t-date when">13/10 às 08:00 → 13/10 às 09:53</p></div>
        <div class="pair counts">
          <div><p class="big">6837</p><p class="t-xs muted">Pontos</p></div>
          <div><p class="big">2</p><p class="t-xs muted">Incidentes</p></div>
        </div>
        <div class="alert"><svg class="icon"><use href="#i-alert"/></svg><span class="t-sm">2 incidentes registrados nesta rota</span></div>
      </article>
    </section>
    <div class="scroll"></div>
  </main>
</div>
</body>
</html>
```

FILE: styles.css
```css
* { box-sizing: border-box; margin: 0; padding: 0; }
body { width: 1920px; height: 874px; overflow: hidden; background: #09090b; color: #fafafa; font-family: "Open Sans", "Noto Sans", sans-serif; font-size: 17px; }
button { font: inherit; color: inherit; border: 0; }
.sprite { display: none; }
.icon { width: 20px; height: 20px; flex: none; fill: none; stroke: currentColor; stroke-width: 2; stroke-linecap: round; stroke-linejoin: round; }
.app { display: flex; height: 874px; }

.t-nav { font-size: 17px; line-height: 24px; letter-spacing: -0.5px; }
.t-sm { font-size: 17px; line-height: 25px; letter-spacing: -0.28px; }
.t-date { font-size: 17px; line-height: 25px; letter-spacing: -0.5px; }
.t-xs { font-size: 14.5px; line-height: 20px; letter-spacing: -0.35px; }
.muted { color: #9f9fa9; }

.sidebar { width: 320px; height: 874px; flex: none; background: #18181b; border-right: 1px solid #232326; display: flex; flex-direction: column; padding: 18px 19px 16px 20px; }
.brand { display: flex; align-items: center; gap: 10px; height: 40px; margin-bottom: 32px; }
.logo { width: 40px; height: 40px; border-radius: 12px; background: #155dfc; display: grid; place-items: center; }
.group { margin-bottom: 27px; }
.group-label { height: 38px; line-height: 38px; color: #b4b4b8; }
.item { display: flex; align-items: center; gap: 10px; height: 45px; padding-bottom: 2px; }
.item .t-nav { position: relative; top: 1px; }
.item .end { margin-left: auto; margin-right: 1px; }
.user { margin-top: auto; display: flex; align-items: center; gap: 10px; height: 40px; }
.avatar { width: 40px; height: 40px; border-radius: 12px; background: #27272a; display: grid; place-items: center; font-size: 16.5px; }
.who { display: flex; flex-direction: column; width: 198px; white-space: nowrap; }
.who .t-nav { line-height: 20px; }
.mail { line-height: 19px; }
.user .icon { margin-left: 1px; }

.main { position: relative; flex: 1; padding: 0 20px; height: 874px; overflow: hidden; }
.head { display: flex; justify-content: space-between; height: 104px; padding-top: 5px; }
h1 { font-size: 37px; line-height: 47px; font-weight: 700; letter-spacing: -1.7px; }
.date { margin-top: 12px; width: 375px; height: 45px; border: 1px solid #303033; border-radius: 10px; background: #141417; display: flex; align-items: center; gap: 20px; padding: 0 15px; }
.card { background: #18181b; border: 1px solid #2b2b2e; border-radius: 17px; }
.stats { display: grid; grid-template-columns: repeat(4, 1fr); gap: 20px; margin-bottom: 30px; }
.stat { height: 195px; padding: 31px 30px; display: flex; flex-direction: column; }
.value { font-size: 36.5px; line-height: 45px; font-weight: 600; letter-spacing: -0.5px; margin-top: 7px; }
.foot { margin-top: 31px; }

.lower { display: flex; gap: 20px; align-items: flex-start; }
.map { position: relative; width: 1040px; height: 600px; border: 1px solid #232326; border-radius: 14px; overflow: hidden; background: #f2efe9; }
.tiles { display: block; width: 1038px; height: 544px; }
.last { width: 500px; height: 465px; padding: 30px; }
.last-head { display: flex; justify-content: space-between; align-items: center; height: 37px; }
h2 { font-size: 21.5px; font-weight: 600; letter-spacing: -0.4px; }
.pill { background: #155dfc; border-radius: 11px; height: 27px; line-height: 26px; padding: 0 11px; }
.pair { display: grid; grid-template-columns: 1fr 1fr; gap: 20px; }
.top { margin-top: 16px; height: 83px; border-bottom: 1px solid #303033; }
.lbl { display: flex; align-items: center; gap: 10px; height: 24px; color: #9f9fa9; }
.mid { font-size: 21.5px; line-height: 32px; font-weight: 600; letter-spacing: -0.4px; margin-top: 5px; }
.period { height: 91px; border-bottom: 1px solid #303033; padding-top: 18px; }
.when { margin-top: 5px; }
.counts { height: 101px; border-bottom: 1px solid #303033; padding-top: 22px; text-align: center; }
.big { font-size: 29px; line-height: 40px; font-weight: 700; letter-spacing: 0.2px; }
.counts .t-xs { line-height: 22px; }
.alert { margin-top: 20px; height: 55px; border-radius: 14px; background: #211614; display: flex; align-items: center; gap: 10px; padding: 0 15px; }
.alert .icon { color: #d96c00; }
.scroll { position: absolute; left: 1594px; top: 84px; width: 2px; height: 616px; background: #9b9b9d; border-radius: 1px; }

.zoom { position: absolute; left: 13px; top: 13px; width: 41px; height: 78px; border: 2px solid rgba(0,0,0,.22); border-radius: 5px; background-clip: padding-box; background-color: #fff; overflow: hidden; display: flex; flex-direction: column; }
.zoom button { flex: 1; background: #fff; color: #000; font: 700 25px/36px "Liberation Sans", sans-serif; }
.zoom button + button { border-top: 1px solid #ccc; }
.reset { position: absolute; left: 985px; top: 25px; width: 41px; height: 41px; border: 2px solid rgba(0,0,0,.2); border-radius: 7px; background: #fff; background-clip: padding-box; display: grid; place-items: center; color: #334155; box-shadow: 0 1px 3px rgba(0,0,0,.25); }
.reset .icon { stroke-width: 2.1; }
.legend { position: absolute; left: 10px; top: 401px; width: 155px; height: 190px; background: rgba(28,28,31,.97); border-radius: 14px; padding: 17px 16px; }
.legend-title { font-size: 14.5px; line-height: 20px; font-weight: 600; color: #9f9fa9; letter-spacing: -0.5px; margin-bottom: 10px; }
.row { display: flex; align-items: center; gap: 10px; height: 25px; margin-bottom: 7.5px; white-space: nowrap; }
.dot { width: 25px; height: 25px; border-radius: 50%; display: grid; place-items: center; }
.dot i { width: 10px; height: 10px; border-radius: 50%; background: #fff; }
.dot .icon { width: 15px; height: 15px; }
.green { background: #00c950; } .red { background: #fb2c36; } .blue { background: #2b7fff; }
.t-leg { font-size: 14.5px; letter-spacing: -0.2px; }

/* map palette */
.land { fill: #f2efe9; } .farm { fill: #eef0d5; } .grass { fill: #cdebb0; } .industry { fill: #ebdbe8; } .retail { fill: #fbd6d3; }
.wood { fill: #add19e; } .park { fill: #c8facc; } .orchard { fill: #f5dcba; } .scrub { fill: #c8d7ab; } .campus { fill: #ffffe5; }
.building { fill: #d3c3ba; } .parking { fill: #e0dede; } .pitch { fill: #88e0be; } .pink { fill: #ffc0cb; } .water { fill: #aad3df; }
.river { fill: none; stroke: #aad3df; stroke-linecap: round; stroke-linejoin: round; }
.w24 { stroke-width: 24; } .w18 { stroke-width: 19; } .w10 { stroke-width: 10; } .w6 { stroke-width: 7; }
.ditch { fill: none; stroke: #66b5ee; stroke-width: 3; stroke-dasharray: 12 3; }
.case, .road { fill: none; stroke-linejoin: round; stroke-linecap: round; }
.case { stroke: #c9c7c5; } .road { stroke: #fff; }
.c6 { stroke-width: 6; } .c9 { stroke-width: 9; } .c13 { stroke-width: 12; } .c15 { stroke-width: 14; } .c20 { stroke-width: 19; }
.ycase, .yfill, .tcase, .tfill, .orangeroad { fill: none; stroke-linejoin: round; }
.ycase { stroke: #b6b66c; stroke-width: 20; } .yfill { stroke: #f7fabf; stroke-width: 15; }
.tcase { stroke: #d98770; stroke-width: 27; } .tfill { stroke: #f9b29c; stroke-width: 22; }
.orangeroad { stroke: #fbc58e; stroke-width: 19; }
.power { fill: none; stroke: #a3a19f; stroke-width: 2.5; }
.nodes { fill: #d8d6d4; stroke: #777; stroke-width: 3; }
.boundary { fill: none; stroke: #bda8ba; stroke-width: 4; stroke-dasharray: 5 15; }
.footway { fill: none; stroke: #4a5de0; stroke-width: 4; stroke-dasharray: 4 8; }
.paths { fill: none; stroke: #fa8072; stroke-width: 3; stroke-dasharray: 4 6; }
.rail { fill: none; stroke: #444; stroke-width: 2.5; }
.track { fill: none; stroke: #d9a860; stroke-width: 3; stroke-dasharray: 12 8; }
.trees { fill: none; stroke: #8db381; stroke-width: 2.6; }
.labels { font-family: "Noto Sans", sans-serif; }
.labels text { paint-order: stroke; stroke: rgba(255,255,255,.75); stroke-width: 6; stroke-linejoin: round; }
.street-name { font-size: 30px; fill: #333; }
.river-name { font-size: 36px; font-style: italic; fill: #6b95c9; }
.park-name { font-size: 38px; font-style: italic; fill: #3c8b45; text-anchor: middle; }
.district { font-size: 44px; fill: #868686; }
.route { fill: none; stroke: #22c55e; stroke-width: 15; stroke-linecap: round; stroke-linejoin: round; opacity: .72; }
.badge { stroke: #fff; stroke-width: 6; stroke-linecap: round; stroke-linejoin: round; fill: none; filter: drop-shadow(0 3px 4px rgba(0,0,0,.25)); }
.badge use { stroke-width: 2; }
.pin { stroke: #fff; stroke-width: 5; filter: drop-shadow(5px 5px 5px rgba(0,0,0,.3)); }
.pin circle { fill: #fff; stroke: none; }
```
